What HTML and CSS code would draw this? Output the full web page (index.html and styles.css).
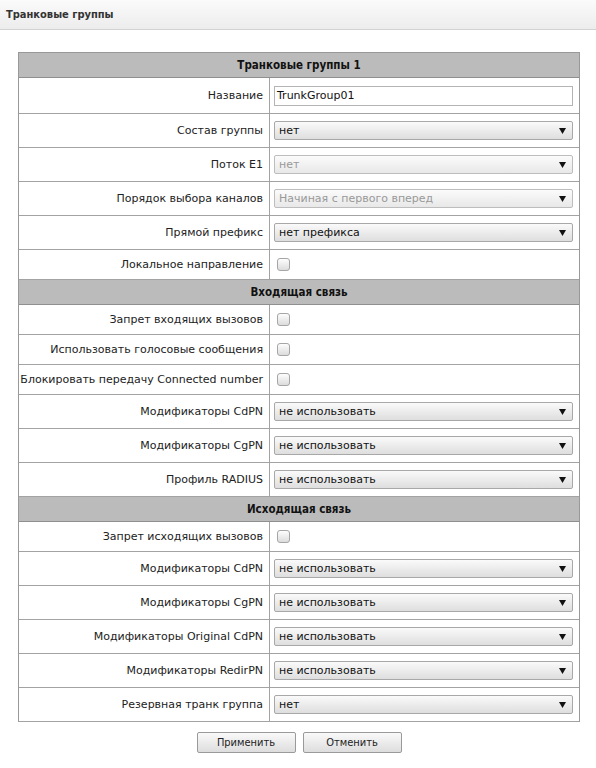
FILE: index.html
```html
<!DOCTYPE html>
<html lang="ru">
<head>
<meta charset="utf-8">
<title>Транковые группы</title>
<link rel="stylesheet" href="styles.css">
</head>
<body>
<div class="topbar"><span class="title">Транковые группы</span></div>

<div class="form">
  <div class="head">Транковые группы 1</div>

  <div class="label r-input">Название</div>
  <div class="field r-input"><div class="input">TrunkGroup01</div></div>

  <div class="label r-sel">Состав группы</div>
  <div class="field r-sel"><div class="select"><span>нет</span><svg class="arrow" viewBox="0 0 8 8"><path d="M0 1h8L4 8z"/></svg></div></div>

  <div class="label r-sel">Поток E1</div>
  <div class="field r-sel"><div class="select disabled"><span>нет</span><svg class="arrow" viewBox="0 0 8 8"><path d="M0 1h8L4 8z"/></svg></div></div>

  <div class="label r-sel">Порядок выбора каналов</div>
  <div class="field r-sel"><div class="select disabled"><span>Начиная с первого вперед</span><svg class="arrow" viewBox="0 0 8 8"><path d="M0 1h8L4 8z"/></svg></div></div>

  <div class="label r-sel">Прямой префикс</div>
  <div class="field r-sel"><div class="select"><span>нет префикса</span><svg class="arrow" viewBox="0 0 8 8"><path d="M0 1h8L4 8z"/></svg></div></div>

  <div class="label r-chk">Локальное направление</div>
  <div class="field r-chk"><span class="check"></span></div>

  <div class="head">Входящая связь</div>

  <div class="label r-chk">Запрет входящих вызовов</div>
  <div class="field r-chk"><span class="check"></span></div>

  <div class="label r-chk">Использовать голосовые сообщения</div>
  <div class="field r-chk"><span class="check"></span></div>

  <div class="label r-chk">Блокировать передачу Connected number</div>
  <div class="field r-chk"><span class="check"></span></div>

  <div class="label r-sel">Модификаторы CdPN</div>
  <div class="field r-sel"><div class="select"><span>не использовать</span><svg class="arrow" viewBox="0 0 8 8"><path d="M0 1h8L4 8z"/></svg></div></div>

  <div class="label r-sel">Модификаторы CgPN</div>
  <div class="field r-sel"><div class="select"><span>не использовать</span><svg class="arrow" viewBox="0 0 8 8"><path d="M0 1h8L4 8z"/></svg></div></div>

  <div class="label r-sel">Профиль RADIUS</div>
  <div class="field r-sel"><div class="select"><span>не использовать</span><svg class="arrow" viewBox="0 0 8 8"><path d="M0 1h8L4 8z"/></svg></div></div>

  <div class="head">Исходящая связь</div>

  <div class="label r-chk">Запрет исходящих вызовов</div>
  <div class="field r-chk"><span class="check"></span></div>

  <div class="label r-sel">Модификаторы CdPN</div>
  <div class="field r-sel"><div class="select"><span>не использовать</span><svg class="arrow" viewBox="0 0 8 8"><path d="M0 1h8L4 8z"/></svg></div></div>

  <div class="label r-sel">Модификаторы CgPN</div>
  <div class="field r-sel"><div class="select"><span>не использовать</span><svg class="arrow" viewBox="0 0 8 8"><path d="M0 1h8L4 8z"/></svg></div></div>

  <div class="label r-sel">Модификаторы Original CdPN</div>
  <div class="field r-sel"><div class="select"><span>не использовать</span><svg class="arrow" viewBox="0 0 8 8"><path d="M0 1h8L4 8z"/></svg></div></div>

  <div class="label r-sel">Модификаторы RedirPN</div>
  <div class="field r-sel"><div class="select"><span>не использовать</span><svg class="arrow" viewBox="0 0 8 8"><path d="M0 1h8L4 8z"/></svg></div></div>

  <div class="label r-sel">Резервная транк группа</div>
  <div class="field r-sel"><div class="select"><span>нет</span><svg class="arrow" viewBox="0 0 8 8"><path d="M0 1h8L4 8z"/></svg></div></div>
</div>

<div class="buttons">
  <button class="btn">Применить</button>
  <button class="btn">Отменить</button>
</div>
</body>
</html>
```

FILE: styles.css
```css
html, body {
  margin: 0;
  padding: 0;
  background: #ffffff;
}
body {
  font-family: "DejaVu Sans", sans-serif;
  font-size: 11px;
  color: #222;
}
.topbar {
  height: 29px;
  border-bottom: 1px solid #d2d2d2;
  background: linear-gradient(#fbfbfb, #ececec);
  display: flex;
  align-items: center;
  padding-left: 6px;
}
.title {
  font-family: "DejaVu Sans Condensed", "DejaVu Sans", sans-serif;
  font-weight: bold;
  font-size: 11px;
  color: #333;
}
.form {
  margin: 22px 0 0 18px;
  width: 562px;
  box-sizing: border-box;
  border: 1px solid #999;
  border-bottom: none;
  display: grid;
  grid-template-columns: 251px 1fr;
}
.head {
  grid-column: 1 / -1;
  height: 25px;
  box-sizing: border-box;
  border-bottom: 1px solid #8f8f8f;
  background: #bbbbbb;
  font-family: "DejaVu Sans Condensed", "DejaVu Sans", sans-serif;
  font-size: 11.5px;
  font-weight: bold;
  color: #111;
  display: flex;
  align-items: center;
  justify-content: center;
}
.label, .field {
  box-sizing: border-box;
  border-bottom: 1px solid #a3a3a3;
  display: flex;
  align-items: center;
}
.label {
  justify-content: flex-end;
  padding-right: 6px;
  border-right: 1px solid #a3a3a3;
  white-space: nowrap;
}
.field {
  padding: 0 6px 0 4px;
}
.r-input { height: 36px; }
.r-sel { height: 34px; }
.r-chk { height: 30px; }
.input {
  flex: 1;
  height: 20px;
  box-sizing: border-box;
  border: 1px solid #b4b4b4;
  background: #fff;
  padding-left: 2px;
  display: flex;
  align-items: center;
  color: #111;
}
.select {
  flex: 1;
  height: 19px;
  box-sizing: border-box;
  border: 1px solid #a8a8a8;
  border-radius: 2px;
  background: linear-gradient(#fafafa, #dedede);
  display: flex;
  align-items: center;
  justify-content: space-between;
  padding: 0 6px 0 4px;
  color: #111;
}
.select.disabled {
  color: #999;
  background: linear-gradient(#fbfbfb, #e8e8e8);
  border-color: #bdbdbd;
}
.arrow {
  width: 7px;
  height: 7px;
  fill: #111;
}
.check {
  width: 13px;
  height: 13px;
  box-sizing: border-box;
  margin-left: 3px;
  border: 1px solid #a6a6a6;
  border-radius: 3px;
  background: linear-gradient(#fdfdfd, #dcdcdc);
}
.buttons {
  width: 562px;
  margin: 10px 0 0 18px;
  display: flex;
  justify-content: center;
  gap: 7px;
}
.btn {
  width: 99px;
  height: 21px;
  box-sizing: border-box;
  border: 1px solid #9a9a9a;
  border-radius: 2px;
  background: linear-gradient(#fafafa, #dddddd);
  font-family: "DejaVu Sans Condensed", "DejaVu Sans", sans-serif;
  font-size: 11px;
  color: #222;
  padding: 0;
}
```
